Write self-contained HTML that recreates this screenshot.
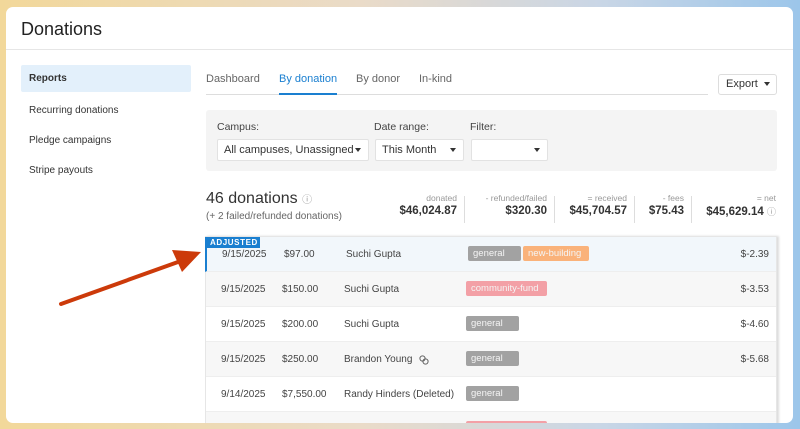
<!DOCTYPE html>
<html><head><meta charset="utf-8"><style>
*{box-sizing:border-box;margin:0;padding:0}
body{width:800px;height:429px;overflow:hidden;font-family:"Liberation Sans",sans-serif;color:#333;
background:linear-gradient(90deg,#f2d89a 0%,#eadbc8 45%,#c9d6e6 75%,#9cc6ea 100%);position:relative}
.card{position:absolute;left:6px;top:7px;width:787px;height:416px;background:#fff;border-radius:7px;overflow:hidden}
.h1{position:absolute;left:15px;top:12px;font-size:18px;color:#222}
.hr{position:absolute;left:0;right:0;top:42px;border-top:1px solid #e6e6e6}
.side{position:absolute;left:15px;top:58px;width:170px}
.side div{height:27px;line-height:27px;padding-left:8px;font-size:10px;color:#333;margin-bottom:3px}
.side .act{background:#e3f0fb;font-weight:bold;border-radius:2px}
.side div+div{line-height:31px}
.tabs{position:absolute;left:200px;top:61px;width:502px;height:27px;border-bottom:1px solid #ddd;font-size:11px;color:#666}
.tabs span{position:absolute;top:5px}
.tabs .a{color:#1a7fd0;border-bottom:2px solid #1a7fd0;height:22px}
.exp{position:absolute;left:712px;top:67px;width:59px;height:21px;border:1px solid #ddd;border-radius:3px;font-size:11px;line-height:19px;padding-left:7px;color:#333}
.car{display:inline-block;width:0;height:0;border-left:3px solid transparent;border-right:3px solid transparent;border-top:4px solid #333;vertical-align:middle}
.filt{position:absolute;left:200px;top:103px;width:571px;height:61px;background:#f4f4f4;border-radius:3px}
.lab{position:absolute;top:11px;font-size:10.5px;color:#444}
.sel{position:absolute;top:29px;height:22px;background:#fff;border:1px solid #e2e2e2;border-radius:2px;font-size:11px;line-height:20px;padding-left:6px;color:#333}
.sel .car{position:absolute;right:7px;top:8px}
.tot{position:absolute;left:200px;top:183px;font-size:16px;color:#333}
.sub{position:absolute;left:200px;top:204px;font-size:10px;color:#666}
.stat{position:absolute;top:186px;text-align:right}
.stat .t{font-size:8.5px;color:#999}
.stat .v{font-size:11.5px;font-weight:bold;color:#333;margin-top:2px}
.sep{position:absolute;top:189px;height:27px;border-left:1px solid #ddd}
.tbl{position:absolute;left:199px;top:229px;width:572px;height:200px;border:1px solid #e6e6e6;box-shadow:2px 0 2px #ddd}
.row{position:absolute;left:0;width:570px;height:35px;border-bottom:1px solid #eee;font-size:10px;color:#444}
.row span{position:absolute;top:12px}
.tag{position:absolute;top:9px;height:15px;font-size:9.5px;line-height:15px;color:#f4f4f4;padding-left:5px;border-radius:2px}
.g{background:#a2a2a2;width:53px}
.p{background:#f3a0a6}
.o{background:#fab27a}
</style></head><body>
<div class="card">
<div class="h1">Donations</div><div class="hr"></div>
<div class="side"><div class="act">Reports</div><div>Recurring donations</div><div>Pledge campaigns</div><div>Stripe payouts</div></div>
<div class="tabs"><span style="left:0">Dashboard</span><span class="a" style="left:73px">By donation</span><span style="left:150px">By donor</span><span style="left:213px">In-kind</span></div>
<div class="exp">Export &nbsp;<span class="car"></span></div>
<div class="filt">
<div class="lab" style="left:11px">Campus:</div><div class="lab" style="left:168px">Date range:</div><div class="lab" style="left:264px">Filter:</div>
<div class="sel" style="left:11px;width:152px">All campuses, Unassigned<span class="car"></span></div>
<div class="sel" style="left:169px;width:89px">This Month<span class="car"></span></div>
<div class="sel" style="left:265px;width:77px"><span class="car"></span></div>
</div>
<div class="tot">46 donations <span style="font-size:10px;color:#999">ⓘ</span></div>
<div class="sub">(+ 2 failed/refunded donations)</div>
<div class="stat" style="right:336px"><div class="t">donated</div><div class="v">$46,024.87</div></div>
<div class="sep" style="left:458px"></div>
<div class="stat" style="right:246px"><div class="t">- refunded/failed</div><div class="v">$320.30</div></div>
<div class="sep" style="left:548px"></div>
<div class="stat" style="right:166px"><div class="t">= received</div><div class="v">$45,704.57</div></div>
<div class="sep" style="left:628px"></div>
<div class="stat" style="right:109px"><div class="t">- fees</div><div class="v">$75.43</div></div>
<div class="sep" style="left:685px"></div>
<div class="stat" style="right:17px"><div class="t">= net</div><div class="v">$45,629.14 <span style="font-weight:normal;font-size:9px;color:#999">ⓘ</span></div></div>
<div class="tbl">
<div class="row" style="top:0;background:#f2f7fb;border-left:2px solid #1a7fd0;left:-1px;width:571px"><div style="position:absolute;left:0;top:0;width:53px;height:11px;background:#1a7fd0;color:#fff;font-size:8px;font-weight:bold;letter-spacing:.6px;line-height:11px;padding-left:3px">ADJUSTED</div><span style="left:15px">9/15/2025</span><span style="left:77px">$97.00</span><span style="left:139px">Suchi Gupta</span><div class="tag g" style="left:261px">general</div><div class="tag o" style="left:316px;width:66px">new-building</div><span style="right:7px">$-2.39</span></div>
<div class="row" style="top:35px;background:#f7f7f7"><span style="left:15px">9/15/2025</span><span style="left:76px">$150.00</span><span style="left:138px">Suchi Gupta</span><div class="tag p" style="left:260px;width:81px">community-fund</div><span style="right:7px">$-3.53</span></div>
<div class="row" style="top:70px"><span style="left:15px">9/15/2025</span><span style="left:76px">$200.00</span><span style="left:138px">Suchi Gupta</span><div class="tag g" style="left:260px">general</div><span style="right:7px">$-4.60</span></div>
<div class="row" style="top:105px;background:#f7f7f7"><span style="left:15px">9/15/2025</span><span style="left:76px">$250.00</span><span style="left:138px">Brandon Young</span><svg style="position:absolute;left:213px;top:13px" width="10" height="10" viewBox="0 0 10 10"><circle cx="3.5" cy="3.5" r="2.6" fill="none" stroke="#666" stroke-width="1"/><circle cx="6.5" cy="6.5" r="2.6" fill="none" stroke="#666" stroke-width="1"/></svg><div class="tag g" style="left:260px">general</div><span style="right:7px">$-5.68</span></div>
<div class="row" style="top:140px"><span style="left:15px">9/14/2025</span><span style="left:76px">$7,550.00</span><span style="left:138px">Randy Hinders (Deleted)</span><div class="tag g" style="left:260px">general</div></div>
<div class="row" style="top:175px;background:#f7f7f7"><div class="tag p" style="left:260px;width:81px"></div></div>
</div>
</div>
<svg style="position:absolute;left:0;top:0" width="800" height="429"><path d="M61 304 L178 262" stroke="#cc3a0a" stroke-width="4" stroke-linecap="round"/><polygon points="201,252 172,250 182,272" fill="#cc3a0a"/></svg>
</body></html>
